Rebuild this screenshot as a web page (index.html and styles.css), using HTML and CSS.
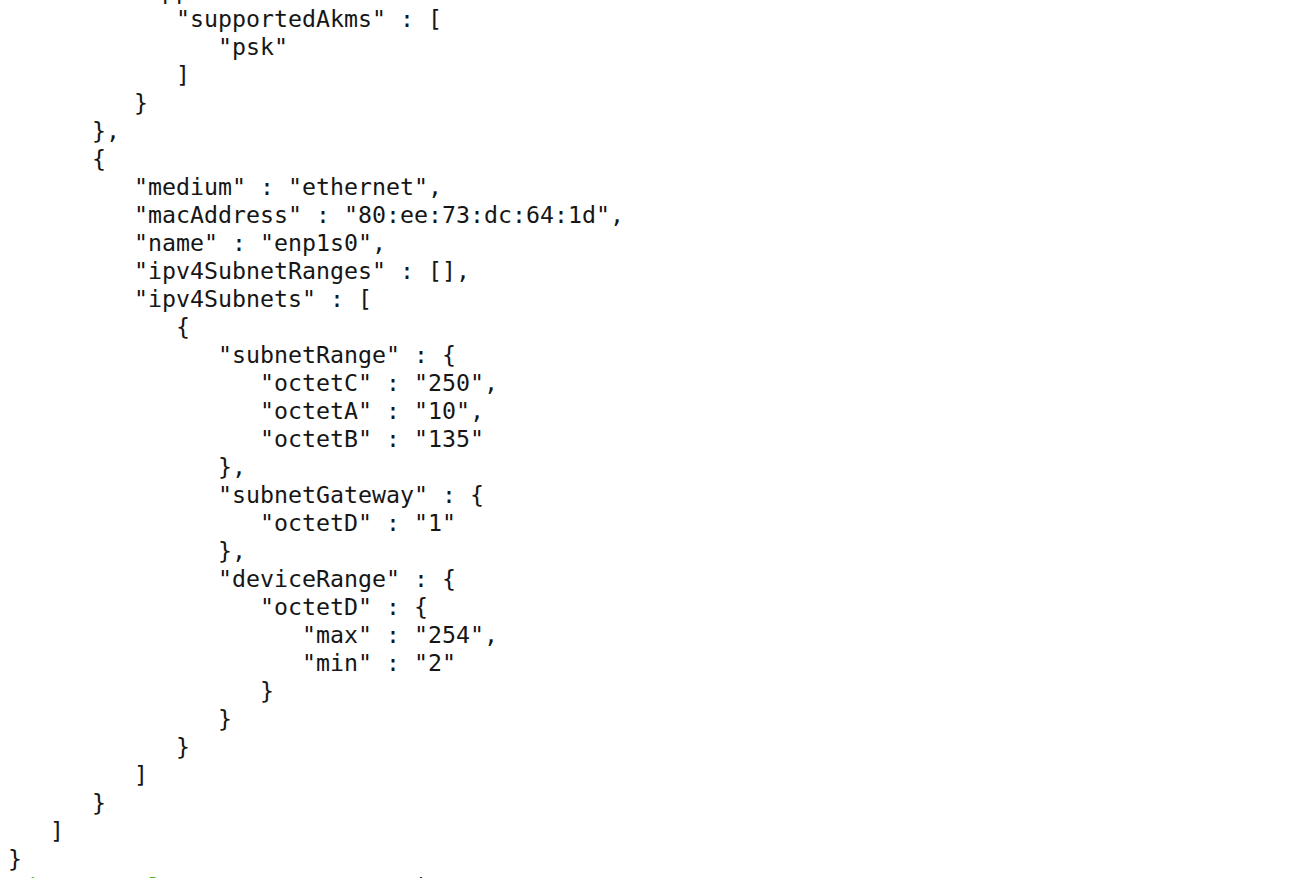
FILE: index.html
```html
<!DOCTYPE html>
<html>
<head>
<meta charset="utf-8">
<link rel="stylesheet" href="styles.css">
</head>
<body>
<pre class="term"><span class="cut">         "apps" :</span>
            "supportedAkms" : [
               "psk"
            ]
         }
      },
      {
         "medium" : "ethernet",
         "macAddress" : "80:ee:73:dc:64:1d",
         "name" : "enp1s0",
         "ipv4SubnetRanges" : [],
         "ipv4Subnets" : [
            {
               "subnetRange" : {
                  "octetC" : "250",
                  "octetA" : "10",
                  "octetB" : "135"
               },
               "subnetGateway" : {
                  "octetD" : "1"
               },
               "deviceRange" : {
                  "octetD" : {
                     "max" : "254",
                     "min" : "2"
                  }
               }
            }
         ]
      }
   ]
}
<span class="g"> d        l</span>  <span class="m">'</span>               <span class="k">|</span></pre>
</body>
</html>
```
FILE: styles.css
```css
html, body {
  margin: 0;
  padding: 0;
  background: #ffffff;
  overflow: hidden;
  height: 878px;
}
.term {
  margin: -23px 0 0 8px;
  font-family: "DejaVu Sans Mono", "Liberation Mono", monospace;
  font-size: 23.25px;
  line-height: 28px;
  color: #161616;
  white-space: pre;
}
.g { color: #4cbb2a; }
.m { color: #b8b8b8; }
.k { color: #222222; }
```
